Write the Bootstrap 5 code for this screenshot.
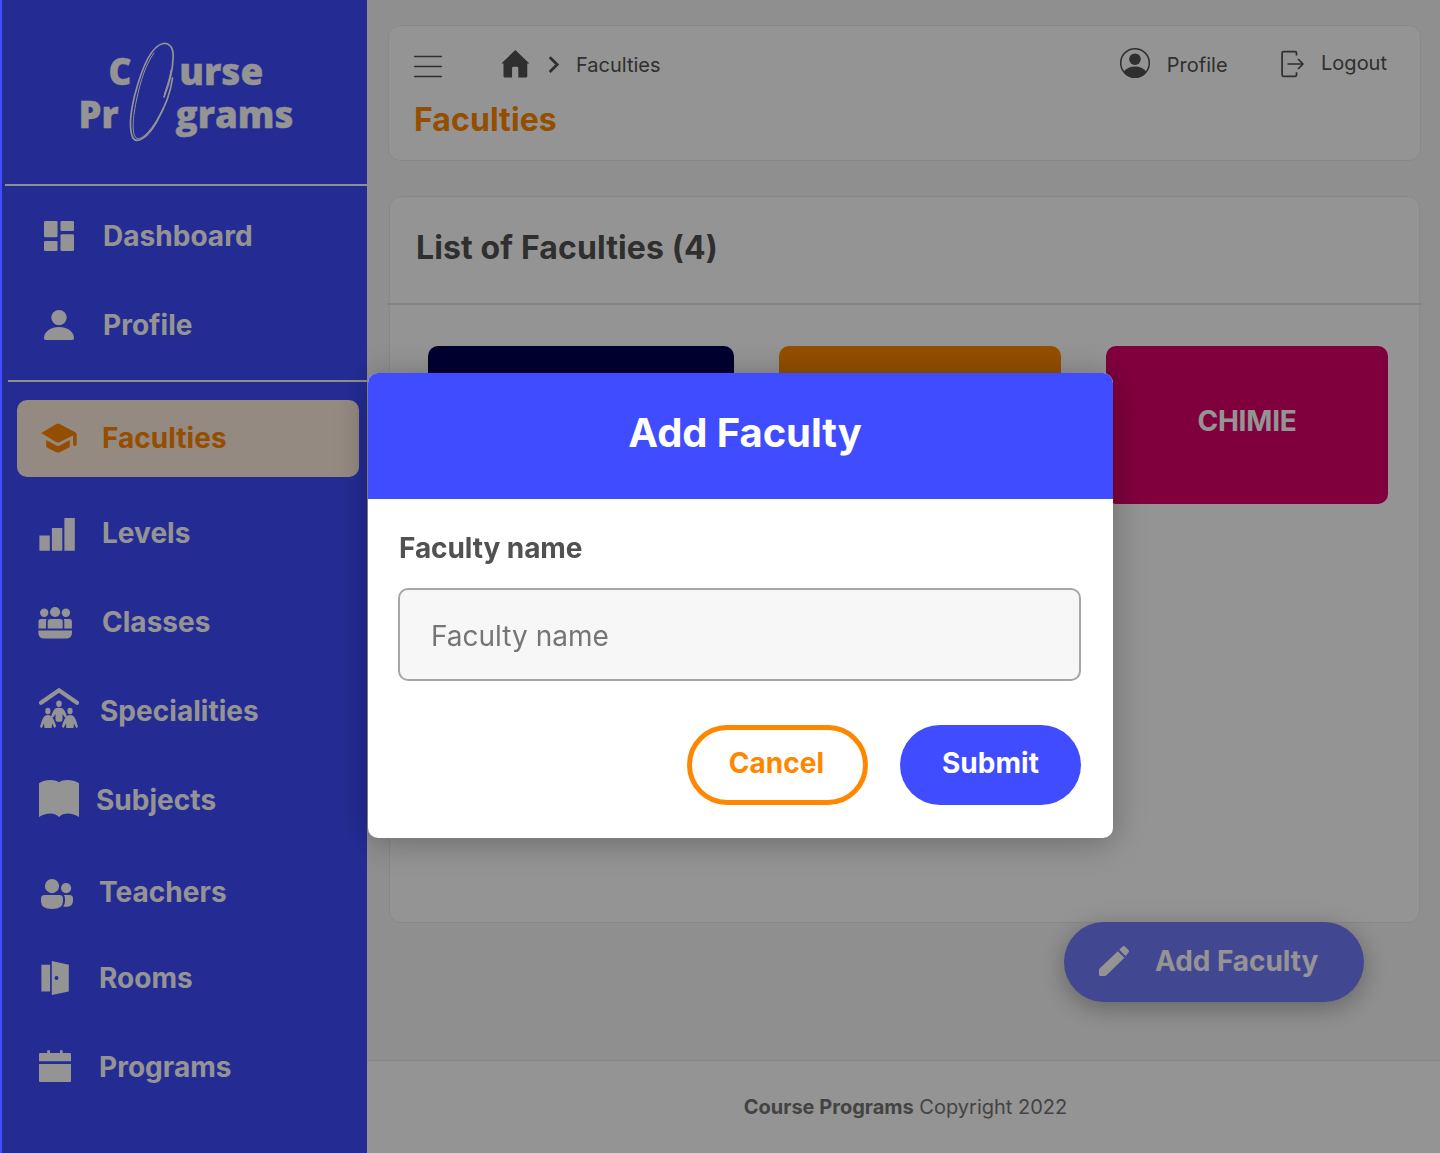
<!DOCTYPE html>
<html lang="en">
<head>
<meta charset="utf-8">
<meta name="viewport" content="width=device-width, initial-scale=1">
<title>Course Programs - Faculties</title>
<link href="https://cdn.jsdelivr.net/npm/bootstrap@5.3.0/dist/css/bootstrap.min.css" rel="stylesheet">
<style>
:root { --brand: #3f4cff; --accent: #ff8700; --ink: #515151; }
body { font-family: Inter, "Liberation Sans", sans-serif; color: var(--ink); background: #f7f7f7; height: 1153px; overflow: hidden; }
svg { display: block; flex: none; overflow: visible; }
.app-shell { height: 1153px; }
.side-panel { width: 367px; background: var(--brand); color: #fff; flex: none; }
.brand-area { height: 184px; }
.side-rule { height: 2px; background: #f5f7f5; }
.side-rule-a { margin-left: 5px; } .side-rule-b { margin-left: 8px; }
.side-top { padding-top: 33px; height: 194px; }
.side-link { height: 34px; margin-bottom: 55px; padding-left: 37px; font-weight: 700; font-size: 28px; line-height: 34px; letter-spacing: .03px; color: #fff; text-decoration: none; }
.side-link svg { width: 44px; height: 44px; fill: currentColor; }
.side-link.is-active { height: 77px; margin: 18px 8px 39px 17px; padding-left: 20px; padding-bottom: 1px; border-radius: 10px; background: #ffeee0; color: var(--accent); }
.g-22 { margin-left: 22px; } .g-21 { margin-left: 21px; } .g-19 { margin-left: 19px; } .g-15 { margin-left: 15px; } .g-18 { margin-left: 18px; }
.main-col { width: 1073px; }
.top-card { margin: 25px 19px 0 21px; height: 136px; border: 1px solid #ebebeb; border-radius: 12px; background: #fff; padding: 0 33px 0 25px; }
.top-row { height: 78px; font-size: 20px; line-height: 24px; font-weight: 400; }
.page-title { font-size: 32px; line-height: 32px; font-weight: 700; letter-spacing: .08px; color: var(--accent); }
.list-card { margin: 35px 20px 0 22px; height: 727px; border: 1px solid #ebebeb; border-radius: 12px; background: #fff; }
.list-head { height: 106px; padding: 0 0 5px 26px; font-size: 32px; font-weight: 700; line-height: 38px; letter-spacing: .12px; }
.list-rule { height: 2px; background: #e3e3e3; margin: 0 -3px; }
.tiles { padding: 41px 31px 0 38px; gap: 45px; }
.tile { height: 158px; width: 282px; border-radius: 10px; color: #fff; font-size: 28px; font-weight: 700; letter-spacing: -.2px; padding-bottom: 8px; }
.tile-navy { width: 306px; background: #000053; } .tile-orange { background: var(--accent); } .tile-pink { background: #dd0069; }
.fab { width: 300px; height: 80px; margin: -1px 76px 0 auto; border-radius: 40px; background: #727afb; color: #fff; font-size: 28px; font-weight: 700; letter-spacing: -.06px; padding: 0 0 2px 32px; box-shadow: 0 6px 26px rgba(0,0,0,.3); flex: none; }
.foot { border-top: 1px solid #ebebeb; background: #fff; height: 93px; font-size: 20px; font-weight: 400; color: #747474; padding-left: 4px; }
.foot b { font-weight: 700; }
.modal-backdrop.shade { left: 2px; width: 1438px; height: 1153px; opacity: .42; }
.modal-dialog.faculty-dialog { width: 745px; max-width: 745px; margin: 373px 0 0 368px; transform: none; }
.faculty-dialog .modal-content { border: 0; border-radius: 10px; height: 465px; box-shadow: 0 4px 36px rgba(0,0,0,.3); background: #fff; color: var(--ink); overflow: hidden; }
.faculty-dialog .modal-header { height: 126px; padding: 0 0 7px 9px; background: var(--brand); border: 0; border-radius: 0; }
.faculty-dialog .modal-title { font-size: 40px; line-height: 48px; font-weight: 700; letter-spacing: -.1px; color: #fff; }
.faculty-dialog .modal-body { padding: 32px 32px 0 30px; }
.faculty-dialog .form-label { font-size: 28px; line-height: 34px; font-weight: 700; letter-spacing: -.08px; margin: 0 0 23px 1px; display: block; }
.faculty-dialog .form-control { height: 93px; border: 2px solid #a6a6a6; border-radius: 10px; background: #f7f7f7; font-size: 28px; font-weight: 400; padding: 2px 31px 0; }
.faculty-dialog .form-control::placeholder { color: #757575; opacity: 1; }
.faculty-dialog .modal-footer { padding: 0; margin-top: 44px; border: 0; gap: 32px; }
.pill { width: 181px; height: 80px; margin: 0; padding: 0 0 4px; border-radius: 40px; font-size: 28px; font-weight: 700; letter-spacing: .05px; }
.pill-cancel, .pill-cancel:hover { border: 5px solid var(--accent); color: var(--accent); background: #fff; padding-right: 2px; }
.pill-submit, .pill-submit:hover { border: 0; color: #fff; background: var(--brand); }
</style>
</head>
<body>
<div class="app-shell d-flex">
  <aside class="side-panel d-flex flex-column">
    <div class="brand-area">
      <svg width="367" height="184" viewBox="0 0 367 184" fill="#fff" font-family="'Open Sans',sans-serif" font-weight="800" font-size="36.500" stroke="#fff" stroke-width=".3">
        <text x="108.500" y="85.200" textLength="23" lengthAdjust="spacingAndGlyphs">C</text>
        <text x="179.300" y="85.200" textLength="84" lengthAdjust="spacingAndGlyphs">urse</text>
        <text x="78.500" y="128.400" textLength="40" lengthAdjust="spacingAndGlyphs">Pr</text>
        <text x="175.500" y="128.400" textLength="118" lengthAdjust="spacingAndGlyphs">grams</text>
        <g fill="none" stroke-width="1" stroke-linecap="round">
          <path stroke-width="1.700" d="M164 97C170 82 173 68 173.200 56C173.200 47 169 42.500 163 43.500C152 46 142 67 134.500 96C130 115 129.500 131 133 138C137 144 147 138 156 123C164 109 171 91 172.500 78"/>
          <path d="M154 53C146 64 140.500 80 136.300 101C132 122 132 136 137 138.500C144 140 156 124 163 108M171 70C169.500 80 166 88 164.500 94"/>
        </g>
      </svg>
    </div>
    <div class="side-rule side-rule-a"></div>
    <nav class="side-top d-flex flex-column">
      <a class="side-link d-flex align-items-center" href="#">
        <svg viewBox="37 214 44 44"><rect x="44" y="221" width="13.500" height="16.300" rx="1.300"/><rect x="60.500" y="221" width="13.500" height="10" rx="1.300"/><rect x="44" y="241" width="13.500" height="10" rx="1.300"/><rect x="60.500" y="234.300" width="13.500" height="16.700" rx="1.300"/></svg>
        <span class="g-22">Dashboard</span></a>
      <a class="side-link d-flex align-items-center" href="#">
        <svg viewBox="37 303 44 44"><circle cx="59" cy="317.600" r="7.700"/><path d="M44 338.200C44 331.500 51 327.100 59 327.100S74 331.500 74 338.200Q74 340 72.200 340H45.800Q44 340 44 338.200Z"/></svg>
        <span class="g-22">Profile</span></a>
    </nav>
    <div class="side-rule side-rule-b"></div>
    <nav class="d-flex flex-column">
      <a class="side-link is-active d-flex align-items-center" href="#">
        <svg viewBox="37 416 44 44"><path d="M41.200 433L56.400 423.900Q58 422.900 59.600 423.900L75.300 432.300Q76.700 433.100 76.700 434.300V444.600Q76.700 446 74.900 446T73.100 444.600V435.500L60 442Q58 443 56 442ZM46.200 440L56.300 445.500Q58 446.300 59.700 445.500L69.800 440V446Q69.800 447.200 68.700 447.800L59.700 452.300Q58 453.200 56.300 452.300L47.300 447.800Q46.200 447.200 46.200 446Z"/></svg>
        <span class="g-21">Faculties</span></a>
      <a class="side-link d-flex align-items-center" href="#">
        <svg viewBox="37 511 44 44"><path d="M39.400 535.500h10.400v15.200H39.400zM51.900 528h10.400v22.700H51.900zM64.400 518h10.400v32.700H64.400z"/></svg>
        <span class="g-21">Levels</span></a>
      <a class="side-link d-flex align-items-center" href="#">
        <svg viewBox="37 600 44 44"><circle cx="44.200" cy="612.700" r="4.200"/><circle cx="55.100" cy="612" r="5.100"/><circle cx="65.900" cy="612.700" r="4.200"/><path d="M38.500 628.500V621.500Q38.500 619 41 619H46.800Q46 620 46 621.500V628.500ZM47.700 628.500V621.500Q47.700 619 50.200 619H60.200Q62.700 619 62.700 621.500V628.500ZM64.300 628.500V621.500Q64.300 620 63.700 619H69.400Q71.900 619 71.900 621.500V628.500ZM38.300 630.500H72V632.500Q72 638.600 65.900 638.600H44.500Q38.300 638.600 38.300 632.500Z"/></svg>
        <span class="g-21">Classes</span></a>
      <a class="side-link d-flex align-items-center" href="#">
        <svg viewBox="37 689 44 44"><path d="M41 702.700L59 690.300L77 702.700" fill="none" stroke="currentColor" stroke-width="4.200" stroke-linecap="round"/><ellipse cx="59" cy="703.700" rx="2.800" ry="3.300"/><ellipse cx="47.900" cy="711" rx="2.600" ry="3.200"/><ellipse cx="70" cy="711" rx="2.600" ry="3.200"/><path d="M55.500 708.300Q59 707 62.500 708.300Q65 710 66.800 716.500L64.800 717.500L62.500 714V719.500Q62.300 721.800 60.500 721.800H57.500Q55.700 721.800 55.500 719.500V714L53.200 717.500L51.200 716.500Q53 710 55.500 708.300ZM45 715.700Q48 714.500 50.800 715.700Q53.800 718 56.200 726.500L54.500 728L52 723.500L51.700 728H44.500L44 723.500L41.800 728L40 727Q42 718 45 715.700ZM67.200 715.700Q70 714.500 73 715.700Q76 718 78 727L76.200 728L74 723.500L73.500 728H66.300L66 723.500L63.500 728L61.800 726.500Q64.200 718 67.200 715.700Z"/></svg>
        <span class="g-19">Specialities</span></a>
      <a class="side-link d-flex align-items-center" href="#" style="margin-bottom:58px">
        <svg viewBox="37 778 44 44"><path d="M39 783.300C45 779.200 54.500 779 59 782.200C63.500 779 73 779.200 79 783.300V817C73 813.200 64 811.500 59 817C54 811.500 45 813.200 39 817Z"/></svg>
        <span class="g-15">Subjects</span></a>
      <a class="side-link d-flex align-items-center" href="#" style="margin-bottom:52px">
        <svg viewBox="37 870 44 44"><circle cx="52" cy="886.100" r="7.100"/><circle cx="66.100" cy="888.100" r="5.100"/><path d="M44.500 895H59.500Q63 895 63 898.500V901.500Q63 909 52 909T41 901.500V898.500Q41 895 44.500 895ZM63.800 895H69.500Q73 895 73 898.500V900.500Q73 908 63.200 906.600Q65 904.500 65 901V898.500Q65 896.300 63.800 895Z"/></svg>
        <span class="g-18">Teachers</span></a>
      <a class="side-link d-flex align-items-center" href="#">
        <svg viewBox="37 956 44 44"><path fill-rule="evenodd" d="M41.400 964.700H50.100V991.500H41.400ZM51.800 961L68.800 964.800V991.500L51.800 995ZM56.500 976.100a1.900 1.900 0 1 0 .01 0Z"/></svg>
        <span class="g-18">Rooms</span></a>
      <a class="side-link d-flex align-items-center mb-0" href="#">
        <svg viewBox="37 1045 44 44"><path d="M40 1053H47.200V1050.300H50V1053H60V1050.300H62.700V1053H70Q71 1053 71 1054V1061.200H39V1054Q39 1053 40 1053ZM39 1064H71V1081Q71 1082 70 1082H40Q39 1082 39 1081Z"/></svg>
        <span class="g-18">Programs</span></a>
    </nav>
  </aside>

  <main class="main-col d-flex flex-column">
    <header class="top-card">
      <div class="top-row d-flex align-items-center">
        <svg width="28" height="28" viewBox="414 52 28 28" stroke="#515151" stroke-width="1.500" stroke-linecap="round" style="margin-top:2px"><path d="M414.700 56.600H441.300M414.700 66.600H441.300M414.700 76.600H441.300"/></svg>
        <svg width="30" height="30" viewBox="501 49 30 30" fill="#515151" style="margin-left:59px;margin-top:-1px"><path d="M515.300 49L529.400 62.600H527.300V75.300Q527.300 76.500 525.600 76.500H518.300V67Q518.300 65.800 516.600 65.800H513.800Q512.100 65.800 512.100 67V76.500H505.200Q503.500 76.500 503.500 75.300V62.600H501.300Z"/></svg>
        <svg width="12" height="18" viewBox="548 56 12 18" fill="none" stroke="#515151" stroke-width="2.800" style="margin-left:17px"><path d="M549.700 57.300L557.200 64.600L549.700 71.900"/></svg>
        <span style="margin-left:16px">Faculties</span>
        <svg class="ms-auto" width="30" height="30" viewBox="1120 48 30 30" style="margin-top:-4px"><circle cx="1135" cy="63" r="14.300" fill="none" stroke="#515151" stroke-width="1.500"/><circle cx="1135" cy="59.200" r="5.800" fill="#515151"/><path fill="#515151" d="M1124 71.300Q1128 66.500 1135 66.500T1146 71.300Q1142 78 1135 78T1124 71.300Z"/></svg>
        <span style="margin-left:16.500px">Profile</span>
        <svg width="24" height="28" viewBox="1281 50 24 28" fill="none" stroke="#515151" stroke-width="1.700" stroke-linejoin="round" style="margin-left:53.500px;margin-top:-2px"><path d="M1296.500 55.500V53Q1296.500 51.700 1295.200 51.700H1283.400Q1282.100 51.700 1282.100 53V75Q1282.100 76.300 1283.400 76.300H1295.200Q1296.500 76.300 1296.500 75V72.300M1287.500 64H1303M1298 59L1303 64L1298 69"/></svg>
        <span style="margin:-4px 0 0 16px">Logout</span>
      </div>
      <div class="page-title">Faculties</div>
    </header>

    <section class="list-card">
      <div class="list-head d-flex align-items-center">List of Faculties (4)</div>
      <div class="list-rule"></div>
      <div class="tiles d-flex">
        <div class="tile tile-navy"></div>
        <div class="tile tile-orange"></div>
        <div class="tile tile-pink d-flex align-items-center justify-content-center">CHIMIE</div>
      </div>
    </section>

    <a href="#" class="fab d-flex align-items-center text-decoration-none">
      <svg width="36" height="36" viewBox="1096 943 36 36" fill="currentColor"><path d="M1099 969.800Q1099 969 1099.600 968.400L1117.800 951.300L1124.400 957.700L1106.500 975.200Q1105.700 976 1104.600 976H1100.200Q1099 976 1099 974.800ZM1119.300 949.800L1122.300 946.700Q1123.700 945.400 1125.100 946.700L1128.500 949.900Q1129.700 951.200 1128.500 952.500L1125.600 955.900Z"/></svg>
      <span style="margin-left:23px">Add Faculty</span></a>

    <footer class="foot mt-auto d-flex align-items-center justify-content-center"><div><b>Course Programs</b> Copyright 2022</div></footer>
  </main>
</div>

<div class="modal-backdrop shade"></div>
<div class="modal d-block" tabindex="-1" role="dialog">
  <div class="modal-dialog faculty-dialog">
    <div class="modal-content">
      <div class="modal-header justify-content-center"><h1 class="modal-title">Add Faculty</h1></div>
      <div class="modal-body">
        <label class="form-label" for="facultyName">Faculty name</label>
        <input id="facultyName" type="text" class="form-control" placeholder="Faculty name">
        <div class="modal-footer justify-content-end">
          <button type="button" class="btn pill pill-cancel">Cancel</button>
          <button type="button" class="btn pill pill-submit">Submit</button>
        </div>
      </div>
    </div>
  </div>
</div>
<script src="https://cdn.jsdelivr.net/npm/bootstrap@5.3.0/dist/js/bootstrap.bundle.min.js"></script>
</body>
</html>
